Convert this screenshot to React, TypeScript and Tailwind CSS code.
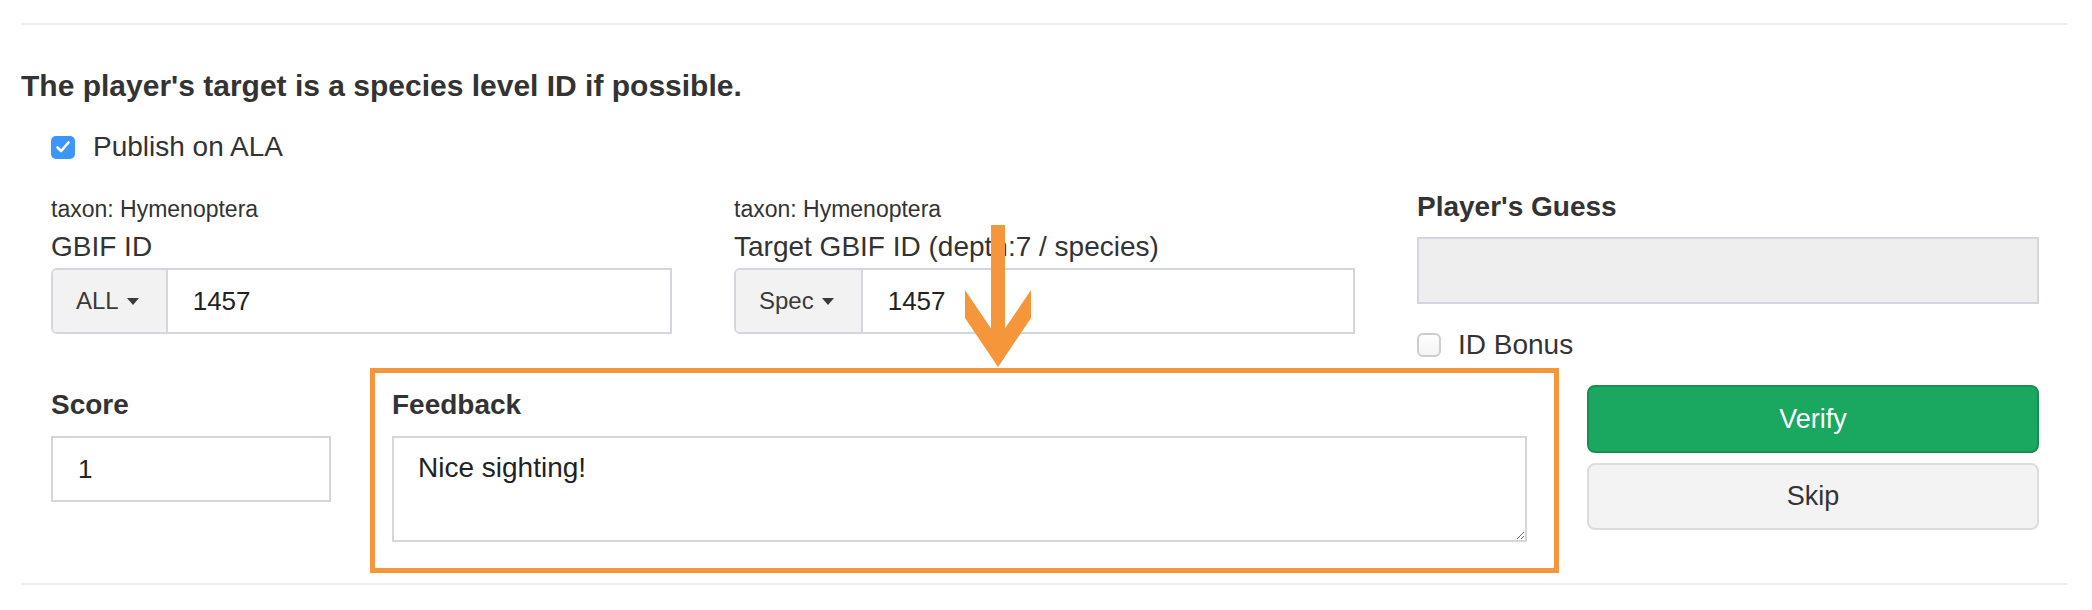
import React from "react";

function Caret() {
  return (
    <svg width="12" height="7" viewBox="0 0 12 7" className="ml-[8px] shrink-0">
      <polygon points="0,0 12,0 6,7" fill="#3a3a3a" />
    </svg>
  );
}

function InputGroup({ addon, value }: { addon: string; value: string }) {
  return (
    <div className="mt-[5px] flex h-[66px] w-[621px] border-2 border-[#d3d6df] rounded-l-[6px]">
      <div className="flex items-center pl-[23px] pr-[27px] bg-[#f2f2f2] border-r-2 border-[#d3d6df] rounded-l-[4px] text-[24px] text-[#3a3a3a]">
        <span>{addon}</span>
        <Caret />
      </div>
      <div className="flex flex-1 items-center pl-[25px] text-[26px] text-[#222]">{value}</div>
    </div>
  );
}

export default function App() {
  return (
    <div className="relative w-[2092px] h-[610px] overflow-hidden bg-white text-[#333] font-['Liberation_Sans',Arial,sans-serif]">
      <div className="pt-[23px] pl-[21px]">
        <div className="w-[2047px] h-[2px] bg-[#ededed]" />
        <h4 className="mt-[44px] text-[30px] leading-[34px] font-bold">
          The player's target is a species level ID if possible.
        </h4>
        <div className="mt-[28px] ml-[30px] flex items-center h-[32px] text-[28px] leading-[32px]">
          <div className="flex items-center justify-center w-[24px] h-[23px] rounded-[5px] bg-[#3b96f7]">
            <svg width="16" height="14" viewBox="0 0 16 14">
              <path d="M2.5 7.5 L6.2 11 L13.5 2.5" fill="none" stroke="#fff" strokeWidth="2.6" strokeLinecap="round" strokeLinejoin="round" />
            </svg>
          </div>
          <span className="ml-[18px]">Publish on ALA</span>
        </div>

        <div className="mt-[28px] flex">
          <div className="w-[683px] px-[30px] pt-[5px]">
            <div className="text-[23px] leading-[26px]">taxon: Hymenoptera</div>
            <div className="mt-[9px] text-[28px] leading-[32px]">GBIF ID</div>
            <InputGroup addon="ALL" value="1457" />
          </div>
          <div className="w-[683px] px-[30px] pt-[5px]">
            <div className="text-[23px] leading-[26px]">taxon: Hymenoptera</div>
            <div className="mt-[9px] text-[28px] leading-[32px]">Target GBIF ID (depth:7 / species)</div>
            <InputGroup addon="Spec" value="1457" />
          </div>
          <div className="w-[683px] px-[30px]">
            <div className="text-[28px] leading-[32px] font-bold">Player's Guess</div>
            <div className="mt-[14px] h-[67px] w-[622px] border-2 border-[#d3d6df] bg-[#eeeeee]" />
            <div className="mt-[25px] flex items-center h-[32px] text-[28px] leading-[32px]">
              <div className="w-[24px] h-[24px] rounded-[6px] border-2 border-[#cdcdcd] bg-gradient-to-b from-white to-[#f4f4f4]" />
              <span className="ml-[17px]">ID Bonus</span>
            </div>
          </div>
        </div>

        <div className="mt-[7px] flex">
          <div className="w-[349px] pl-[30px] pt-[21px]">
            <div className="text-[28px] leading-[32px] font-bold">Score</div>
            <div className="mt-[15px] flex items-center h-[66px] w-[280px] border-2 border-[#d3d6df] pl-[25px] text-[26px] text-[#222]">
              1
            </div>
          </div>
          <div className="w-[1189px] h-[205px] border-[5px] border-[#f5963a] pl-[17px] pt-[16px]">
            <div className="text-[28px] leading-[32px] font-bold">Feedback</div>
            <textarea
              readOnly
              defaultValue="Nice sighting!"
              className="block mt-[15px] w-[1135px] h-[106px] border-2 border-[#d3d6df] pt-[10px] pl-[24px] text-[28px] leading-[40px] text-[#222] outline-none"
            />
          </div>
          <div className="ml-[28px] w-[452px] pt-[17px]">
            <div className="flex items-center justify-center h-[68px] rounded-[8px] border-2 border-[#17904f] bg-[#1aa760] text-[27px] text-white">
              Verify
            </div>
            <div className="mt-[10px] flex items-center justify-center h-[67px] rounded-[8px] border-2 border-[#dcdcdc] bg-[#f3f3f3] text-[27px] text-[#333]">
              Skip
            </div>
          </div>
        </div>

        <div className="mt-[10px] w-[2047px] h-[2px] bg-[#ededed]" />
      </div>

      <svg className="absolute left-0 top-0 pointer-events-none" width="2092" height="610" viewBox="0 0 2092 610">
        <polygon
          points="991,225 1005,225 1005,328.5 1031,290 1031,318 998,367 965,318 965,290 991,328.5"
          fill="#f5963a"
        />
      </svg>
    </div>
  );
}
